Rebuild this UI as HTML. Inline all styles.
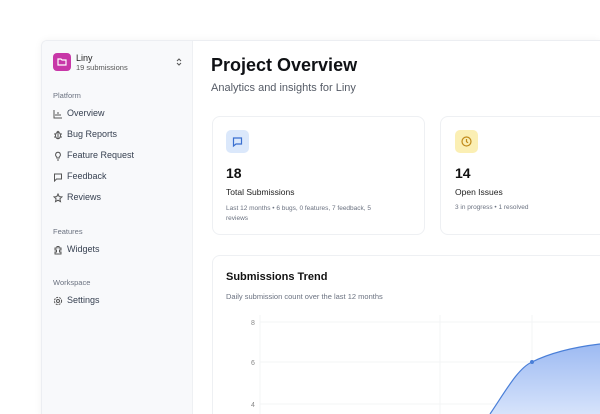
<!DOCTYPE html>
<html style="width:600px;height:414px;overflow:hidden"><head><meta charset="utf-8"><style>
*{margin:0;padding:0;box-sizing:border-box}
body{width:600px;height:414px;overflow:hidden;background:#fff;font-family:"Liberation Sans",sans-serif;color:#111}
#wrap{position:relative;width:600px;height:414px;overflow:hidden}
.win{position:absolute;left:41px;top:40px;width:559px;height:380px;border:1px solid #eceef2;border-right:none;border-radius:6px 0 0 6px;box-shadow:0 0 8px rgba(0,0,0,.05);background:#fff;overflow:hidden}
.side{position:absolute;left:0;top:0;width:151px;height:100%;background:#f8f9fb;border-right:1px solid #eef0f3}
.logo{position:absolute;left:11px;top:12px;width:18px;height:18px;border-radius:4px;background:#c837a8}
.t{position:absolute;white-space:nowrap}
.sec{font-size:7.5px;color:#6b7280}
.it{font-size:9px;color:#374151}
.ic{position:absolute;width:10px;height:10px}
.card{position:absolute;border:1px solid #eef0f3;border-radius:8px;background:#fff}
</style></head><body><div id="wrap">
<div class="win">
<div class="side">
<div class="logo"><svg width="18" height="18" viewBox="0 0 18 18"><path d="M5 6h3l1 1h4v5H5z" fill="none" stroke="#fff" stroke-width="1.2"/></svg></div>
<div class="t" style="left:34px;top:12px;font-size:9px;color:#222">Liny</div>
<div class="t" style="left:34px;top:22px;font-size:7.5px;color:#555">19 submissions</div>
<svg class="ic" style="left:132px;top:16px" viewBox="0 0 10 10"><path d="M3 4l2-2 2 2M3 6l2 2 2-2" fill="none" stroke="#555" stroke-width="1"/></svg>
<div class="t sec" style="left:11px;top:50px">Platform</div>
<svg class="ic" style="left:11px;top:68px" viewBox="0 0 10 10" fill="none" stroke="#555" stroke-width="1"><path d="M1 1v8h8M3 7V5M5 7V3M7 7V5"/></svg>
<div class="t it" style="left:25px;top:67px">Overview</div>
<svg class="ic" style="left:11px;top:89px" viewBox="0 0 10 10" fill="none" stroke="#555" stroke-width="1"><ellipse cx="5" cy="5.5" rx="2.5" ry="3.2"/><path d="M1 4h1.5M7.5 4H9M1 7h1.5M7.5 7H9M5 3v6M4 1l1 1.5 1-1.5"/></svg>
<div class="t it" style="left:25px;top:88px">Bug Reports</div>
<svg class="ic" style="left:11px;top:110px" viewBox="0 0 10 10" fill="none" stroke="#555" stroke-width="1"><path d="M3.8 7V6C2.5 5 2.5 3.8 2.7 3A2.4 2.4 0 0 1 7.3 3C7.5 3.8 7.5 5 6.2 6V7zM4 9h2"/></svg>
<div class="t it" style="left:25px;top:109px">Feature Request</div>
<svg class="ic" style="left:11px;top:131px" viewBox="0 0 10 10" fill="none" stroke="#555" stroke-width="1"><path d="M1.5 2h7v5h-5l-2 2z"/></svg>
<div class="t it" style="left:25px;top:130px">Feedback</div>
<svg class="ic" style="left:11px;top:152px" viewBox="0 0 10 10" fill="none" stroke="#555" stroke-width="1"><path d="M5 1l1.2 2.6 2.8.3-2.1 1.9.6 2.8L5 7.2 2.5 8.6l.6-2.8L1 3.9l2.8-.3z"/></svg>
<div class="t it" style="left:25px;top:151px">Reviews</div>
<div class="t sec" style="left:11px;top:186px">Features</div>
<svg class="ic" style="left:11px;top:204px" viewBox="0 0 10 10" fill="none" stroke="#555" stroke-width="1"><path d="M2 3h2V1.5h2V3h2v2H6.5v2H8v2H2V7h1.5V5H2z"/></svg>
<div class="t it" style="left:25px;top:203px">Widgets</div>
<div class="t sec" style="left:11px;top:237px">Workspace</div>
<svg class="ic" style="left:11px;top:255px" viewBox="0 0 10 10" fill="none" stroke="#555" stroke-width="1"><circle cx="5" cy="5" r="1.5"/><circle cx="5" cy="5" r="3.6" stroke-dasharray="2 1"/></svg>
<div class="t it" style="left:25px;top:254px">Settings</div>
</div>
</div>
<div class="t" style="left:211px;top:55px;font-size:18px;font-weight:bold;color:#0f1115">Project Overview</div>
<div class="t" style="left:211px;top:82px;font-size:11px;color:#555b66">Analytics and insights for Liny</div>
<div class="card" style="left:212px;top:116px;width:213px;height:119px">
<div style="position:absolute;left:13px;top:13px;width:23px;height:23px;border-radius:5px;background:#dbe8fb"><svg width="23" height="23" viewBox="0 0 23 23"><path d="M7.5 8h8v6h-5.5l-2.5 2z" fill="none" stroke="#3a6fd0" stroke-width="1.2"/></svg></div>
<div class="t" style="left:13px;top:48px;font-size:14px;font-weight:bold">18</div>
<div class="t" style="left:13px;top:70px;font-size:8.5px;color:#222">Total Submissions</div>
<div class="t" style="left:13px;top:87px;font-size:6.5px;color:#6b7280;line-height:10px">Last 12 months • 6 bugs, 0 features, 7 feedback, 5<br>reviews</div>
</div>
<div class="card" style="left:440px;top:116px;width:170px;height:119px">
<div style="position:absolute;left:14px;top:13px;width:23px;height:23px;border-radius:5px;background:#fbefb4"><svg width="23" height="23" viewBox="0 0 23 23" fill="none" stroke="#c08a1a" stroke-width="1.2"><circle cx="11.5" cy="11.5" r="4.5"/><path d="M11.5 9v2.7l1.6 1"/></svg></div>
<div class="t" style="left:14px;top:48px;font-size:14px;font-weight:bold">14</div>
<div class="t" style="left:14px;top:70px;font-size:8.5px;color:#222">Open Issues</div>
<div class="t" style="left:14px;top:87px;font-size:6.5px;color:#6b7280">3 in progress • 1 resolved</div>
</div>
<div class="card" style="left:212px;top:255px;width:400px;height:170px">
<div class="t" style="left:13px;top:15px;font-size:11px;font-weight:bold">Submissions Trend</div>
<div class="t" style="left:13px;top:36px;font-size:7.5px;color:#6b7280">Daily submission count over the last 12 months</div>
</div>
<svg style="position:absolute;left:0;top:0" width="600" height="414">
<defs><linearGradient id="g" x1="0" y1="0" x2="0" y2="1"><stop offset="0" stop-color="#9dbaf2"/><stop offset="1" stop-color="#d6e3fb"/></linearGradient></defs>
<g stroke="#f3f4f6" stroke-width="1"><path d="M260 322H600M260 362H600M260 404H600M260 315V414M440 315V414M532 315V414"/></g>
<g font-family="Liberation Sans" font-size="7" fill="#888"><text x="251" y="325">8</text><text x="251" y="365">6</text><text x="251" y="407">4</text></g>
<path d="M490 414C505 392 518 368 532 362C552 352 575 347 600 344V414Z" fill="url(#g)"/>
<path d="M490 414C505 392 518 368 532 362C552 352 575 347 600 344" fill="none" stroke="#4a7fd8" stroke-width="1.2"/>
<circle cx="532" cy="362" r="2" fill="#4a7fd8"/>
</svg>
</div></body></html>
